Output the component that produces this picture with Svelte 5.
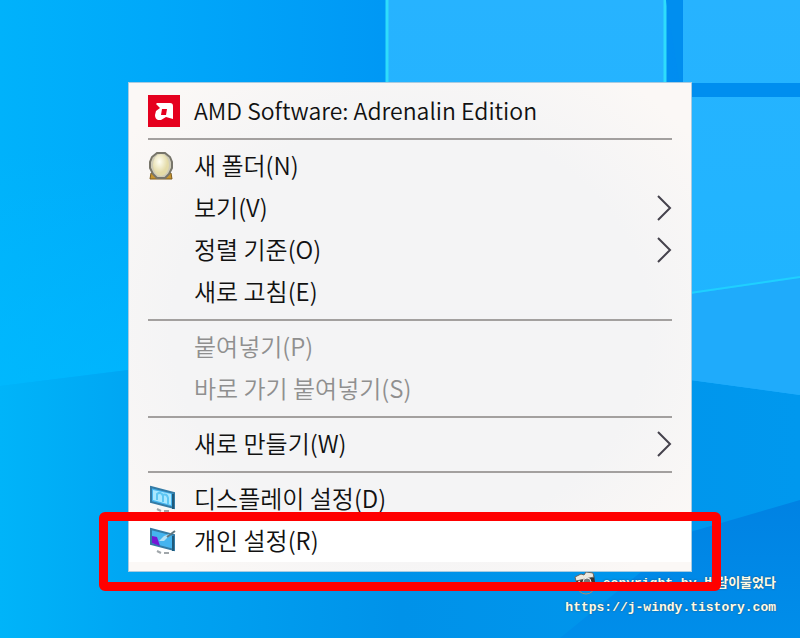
<script>
  const groups = [
    [{ label: 'AMD Software: Adrenalin Edition', icon: 'amd', latin: true }],
    [
      { label: '새 폴더(N)', icon: 'folder' },
      { label: '보기(V)', sub: true },
      { label: '정렬 기준(O)', sub: true },
      { label: '새로 고침(E)' }
    ],
    [
      { label: '붙여넣기(P)', disabled: true },
      { label: '바로 가기 붙여넣기(S)', disabled: true }
    ],
    [{ label: '새로 만들기(W)', sub: true }],
    [
      { label: '디스플레이 설정(D)', icon: 'display' },
      { label: '개인 설정(R)', icon: 'personal', active: true }
    ]
  ];
</script>

<main class="desktop">
  <svg class="wallpaper" viewBox="0 0 800 638" preserveAspectRatio="none" aria-hidden="true">
    <defs>
      <linearGradient id="sky" x1="0" y1="0" x2="1" y2="0">
        <stop offset="0" stop-color="#00b2fb" />
        <stop offset=".2" stop-color="#00a8fa" />
        <stop offset=".48" stop-color="#0098f5" />
        <stop offset="1" stop-color="#0088ee" />
      </linearGradient>
      <linearGradient id="glow" x1="0" y1="0" x2="0" y2="1">
        <stop offset="0" stop-color="#00bcff" stop-opacity="0" />
        <stop offset="1" stop-color="#00bcff" stop-opacity=".6" />
      </linearGradient>
      <linearGradient id="pane" x1="0" y1="0" x2="0" y2="1">
        <stop offset="0" stop-color="#27b3ff" />
        <stop offset="1" stop-color="#1db5ff" />
      </linearGradient>
      <linearGradient id="floor" x1="0" y1="0" x2="1" y2="0">
        <stop offset="0" stop-color="#00b4f9" />
        <stop offset=".16" stop-color="#00a6f3" />
        <stop offset=".5" stop-color="#0092e9" />
        <stop offset="1" stop-color="#0098ee" />
      </linearGradient>
      <linearGradient id="corner" x1="0" y1="0" x2="0" y2="1">
        <stop offset="0" stop-color="#0082e3" />
        <stop offset="1" stop-color="#008eea" />
      </linearGradient>
    </defs>
    <rect width="800" height="638" fill="url(#sky)" />
    <path d="M0 150H128V370L0 386Z" fill="url(#glow)" />
    <path d="M0 386 128 370 400 340 800 395V638H0Z" fill="url(#floor)" />
    <path d="M387 0H665V82H387ZM683 0H800V83H683ZM683 97H800V395L683 379Z" fill="url(#pane)" />
    <path d="M683 295 800 278V395L683 379Z" fill="#1fabfb" />
    <path d="M683 294 800 277" stroke="#1fd0ff" stroke-width="2" />
    <path d="M387 0V82M665 0V82" stroke="#2fdcfb" stroke-width="3" />
    <path d="M666 0H682V83H800V97H682Z" fill="#008eef" />
    <path d="M690 532 800 500V638H560Z" fill="url(#corner)" />
  </svg>

  <div class="watermark">
    <p>
      <svg width="24" height="24" viewBox="0 0 24 24" aria-hidden="true">
        <circle cx="13" cy="13" r="9" fill="none" stroke="#a98b70" />
        <path d="M2 6 21 3 22 10 19 15 5 16Z" fill="#39332f" />
        <path d="M2 5 8 2 11 3 13 0 20 1 21 5 3 9Z" fill="#eee9df" stroke="#6a6660" />
        <circle cx="14" cy="10" r="4" fill="#777" stroke="#eee" />
        <path d="M6 9 7 14" stroke="#ddd" stroke-width="2" />
      </svg>
      <span>copyright by 바람이불었다</span>
    </p>
    <a href="https://j-windy.tistory.com">https://j-windy.tistory.com</a>
  </div>

  <div class="menu" role="menu">
    {#each groups as group, g}
      {#if g > 0}<hr />{/if}
      {#each group as item}
        <button class:active={item.active} class:latin={item.latin} disabled={item.disabled} role="menuitem">
          <span class="icon">
            {#if item.icon === 'amd'}
              <svg width="32" height="32" viewBox="0 0 32 32">
                <rect width="32" height="32" fill="#e5001e" />
                <path d="M9 8H22Q25 8 25 11V24L18 22 13 25H10Q7 24 7 20L8 16 12 13 8 9ZM14 14 13 20H18L19 14Z" fill="#fff" fill-rule="evenodd" />
              </svg>
            {:else if item.icon === 'folder'}
              <svg width="26" height="30" viewBox="0 0 26 30">
                <defs>
                  <radialGradient id="egg" cx=".4" cy=".35">
                    <stop offset="0" stop-color="#fffff4" />
                    <stop offset="1" stop-color="#e4dba8" />
                  </radialGradient>
                </defs>
                <path d="M2 28 3 22H23L24 28Z" fill="#c7942e" stroke="#7d5d20" />
                <path d="M9 2H17L22 6 24 11V17L21 23 17 27H9L5 23 2 17V11L4 6Z" fill="#cfccb8" stroke="#77756a" stroke-width="2" />
                <ellipse cx="13" cy="14" rx="8" ry="11" fill="url(#egg)" />
              </svg>
            {:else if item.icon}
              <svg width="28" height="28" viewBox="0 0 28 28">
                <path d="M3 2 26 8V23L3 17Z" fill="#45b4ef" stroke="#347ba5" stroke-width="2" />
                {#if item.icon === 'display'}
                  <path d="M5 5 23 9V20L5 15Z" fill="#a9e8ff" />
                  <path d="M9 15V9Q13 6 15 11V17M14 10Q19 8 20 13V19" fill="none" stroke="#5cc6f3" stroke-width="2" />
                {:else}
                  <path d="M4 9 9 10 12 19 4 16Z" fill="#7417d4" />
                  <path d="M11 14 16 9 24 6 16 14Z" fill="#b5e2f6" />
                  <path d="M19 10 27 4" stroke="#5f7781" stroke-width="2" />
                {/if}
                <path d="M25 9V24" stroke="#205a7b" stroke-width="2" />
                <path d="M9 24 13 26M16 26H21" stroke="#a0a6aa" stroke-width="2" />
              </svg>
            {/if}
          </span>
          <span class="label">{item.label}</span>
          {#if item.sub}
            <svg class="chevron" width="16" height="26" viewBox="0 0 16 26">
              <path d="M2 1 14 13 2 25" fill="none" stroke="#45424c" stroke-width="2" />
            </svg>
          {/if}
          {#if item.active}<span class="marker"></span>{/if}
        </button>
      {/each}
    {/each}
  </div>
</main>

<style>
  :global(body) {
    margin: 0;
  }
  .desktop {
    position: relative;
    box-sizing: border-box;
    min-height: 100vh;
    padding: 82px 108px 66px 128px;
    overflow: hidden;
    font-family: 'Noto Sans CJK KR', sans-serif;
  }
  .wallpaper {
    position: absolute;
    inset: 0;
    width: 100%;
    height: 100%;
  }
  .menu {
    position: relative;
    padding: 7px 0 9px;
    border: 1px solid #a9cbe0;
    background: radial-gradient(ellipse at center, #f4f4f5 60%, #fbf8f6 90%);
  }
  button {
    position: relative;
    display: flex;
    align-items: center;
    width: 100%;
    height: 42px;
    padding: 0 19px;
    border: 0;
    background: none;
    color: #111;
    font: 350 24px/42px 'Noto Sans CJK KR', sans-serif;
    text-align: left;
  }
  button:disabled {
    color: #8f8f8f;
  }
  .latin {
    font-size: 23px;
  }
  .active {
    background: #fff;
  }
  .icon {
    display: flex;
    width: 46px;
  }
  .label {
    flex: 1;
    padding-bottom: 2px;
    line-height: 40px;
    white-space: nowrap;
  }
  hr {
    height: 2px;
    margin: 6px 19px 5px;
    border: 0;
    background: #a3a09f;
  }
  .marker {
    position: absolute;
    inset: -8px -30px -29px;
    border: 9px solid #f00;
    border-radius: 6px;
  }
  .watermark {
    position: absolute;
    right: 24px;
    bottom: 20px;
    color: #fffbe6;
    font: 700 13px/20px 'Liberation Mono', 'Noto Sans CJK KR', monospace;
    text-shadow: 0 0 2px #24506e;
  }
  .watermark p {
    display: flex;
    align-items: center;
    justify-content: flex-end;
    gap: 6px;
    height: 28px;
    margin: 0;
  }
  .watermark a {
    color: inherit;
    text-decoration: none;
  }
</style>
